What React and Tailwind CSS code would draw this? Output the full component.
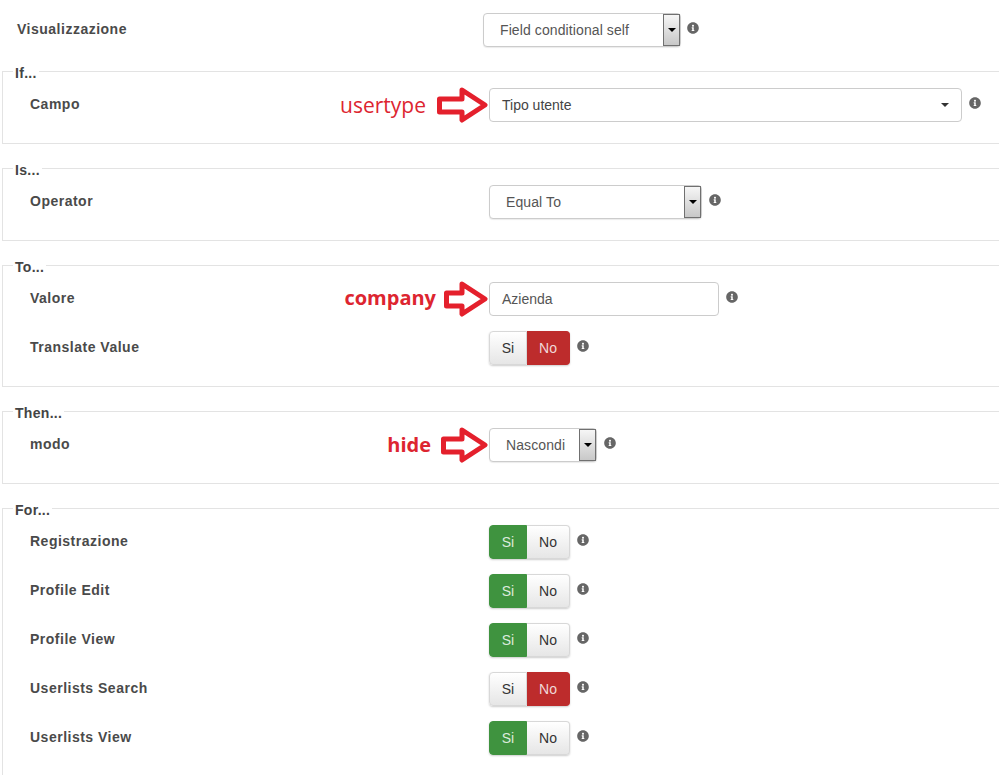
import React from 'react';
import { FaInfoCircle } from 'react-icons/fa';

const Info = ({ className = '' }) => (
  <FaInfoCircle className={`text-[#666] text-[12px] shrink-0 ${className}`} />
);

const Arrow = ({ width }) => (
  <svg width={width} height="36" viewBox={`0 0 ${width} 36`} className="shrink-0">
    <path
      d={`M2.5 12 H${width - 27} V3 L${width - 4} 18 L${width - 27} 33 V25 H2.5 Z`}
      fill="#fff"
      stroke="#e4202c"
      strokeWidth="5"
      strokeLinejoin="round"
    />
  </svg>
);

const NativeSelect = ({ value, width }) => (
  <div className={`flex h-[34px] items-center justify-between rounded-[4px] border border-[#ccc] bg-white pl-4 text-[14px] tracking-[0.1px] text-[#555] shadow-[0_1px_1px_rgba(0,0,0,0.08)] ${width}`}>
    <span>{value}</span>
    <span className="flex h-[32px] w-[17px] items-center justify-center border-x border-y border-[#707070] bg-gradient-to-b from-[#f6f6f6] to-[#c8c8c8]">
      <span className="border-x-[4px] border-t-[4px] border-x-transparent border-t-black" />
    </span>
  </div>
);

const Toggle = ({ on }) => (
  <div className="flex h-[34px] rounded-[4px] text-[14px] shadow-[0_1px_2px_rgba(0,0,0,0.2)]">
    <span
      className={`flex w-[38px] items-center justify-center rounded-l-[4px] border ${
        on
          ? 'border-[#3f933f] bg-[#3f933f] text-[#dcebdc]'
          : 'border-[#d8d8d8] bg-gradient-to-b from-white to-[#e6e6e6] text-[#333]'
      }`}
    >
      Si
    </span>
    <span
      className={`flex w-[43px] items-center justify-center rounded-r-[4px] border border-l-0 ${
        on
          ? 'border-[#d8d8d8] bg-gradient-to-b from-white to-[#e6e6e6] text-[#333]'
          : 'border-[#bd2c2c] bg-[#bd2c2c] text-[#f0d8d8]'
      }`}
    >
      No
    </span>
  </div>
);

const Note = ({ text, bold, gap, arrow, textClass = '' }) => (
  <div className={`flex items-center justify-end ${gap}`}>
    <span className={`font-['Open_Sans',sans-serif] leading-none text-[#dd2530] ${bold ? 'text-[20px] font-bold' : 'text-[21px]'} ${textClass}`}>
      {text}
    </span>
    <Arrow width={arrow} />
  </div>
);

const Row = ({ label, note, children }) => (
  <div className="flex h-[34px] items-center">
    <div className="flex h-full w-[459px] shrink-0 items-center justify-between">
      <span className="pb-[2px] text-[14px] font-bold tracking-[0.5px] text-[#4a4a4a]">{label}</span>
      {note}
    </div>
    {children}
    <Info className="ml-[7px] mb-[4px]" />
  </div>
);

const Section = ({ title, children }) => (
  <fieldset className="ml-[2px] mr-[-4px] flex flex-col gap-[15px] border border-[#e3e3e3] pb-[21px] pl-[27px] pt-[10px]">
    <legend className="ml-[-17px] px-[2px] text-[14px] font-bold leading-[14px] tracking-[0.3px] text-[#444]">
      <span className="block translate-y-[2px]">{title}</span>
    </legend>
    {children}
  </fieldset>
);

const forRows = [
  { label: 'Registrazione', on: true },
  { label: 'Profile Edit', on: true },
  { label: 'Profile View', on: true },
  { label: 'Userlists Search', on: false },
  { label: 'Userlists View', on: true },
];

export default function App() {
  return (
    <div className="h-screen overflow-hidden bg-white pt-[13px] font-['Liberation_Sans',sans-serif]">
      <div className="flex h-[34px] items-center pl-[17px]">
        <span className="w-[466px] pb-[2px] text-[14px] font-bold tracking-[0.5px] text-[#4a4a4a]">Visualizzazione</span>
        <NativeSelect value="Field conditional self" width="w-[198px]" />
        <Info className="ml-[6px] mb-[4px]" />
      </div>

      <div className="mt-[17px] flex flex-col gap-[17px]">
        <Section title="If...">
          <Row label="Campo" note={<Note text="usertype" gap="gap-[11px]" arrow={52} />}>
            <div className="flex h-[34px] w-[473px] items-center justify-between rounded-[4px] border border-[#ccc] bg-white pl-[12px] pr-[12px] text-[14px] text-[#444]">
              <span>Tipo utente</span>
              <span className="border-x-[4px] border-t-[4px] border-x-transparent border-t-[#333]" />
            </div>
          </Row>
        </Section>

        <Section title="Is...">
          <Row label="Operator">
            <NativeSelect value="Equal To" width="w-[213px]" />
          </Row>
        </Section>

        <Section title="To...">
          <Row label="Valore" note={<Note text="company" bold gap="gap-[8px]" arrow={45} textClass="pb-[3px]" />}>
            <div className="flex h-[34px] w-[230px] items-center rounded-[4px] border border-[#ccc] bg-white pl-[12px] text-[14px] text-[#555]">
              Azienda
            </div>
          </Row>
          <Row label="Translate Value">
            <Toggle on={false} />
          </Row>
        </Section>

        <Section title="Then...">
          <Row label="modo" note={<Note text="hide" bold gap="gap-[10px]" arrow={48} />}>
            <NativeSelect value="Nascondi" width="w-[108px]" />
          </Row>
        </Section>

        <Section title="For...">
          {forRows.map(row => (
            <Row key={row.label} label={row.label}>
              <Toggle on={row.on} />
            </Row>
          ))}
        </Section>
      </div>
    </div>
  );
}
